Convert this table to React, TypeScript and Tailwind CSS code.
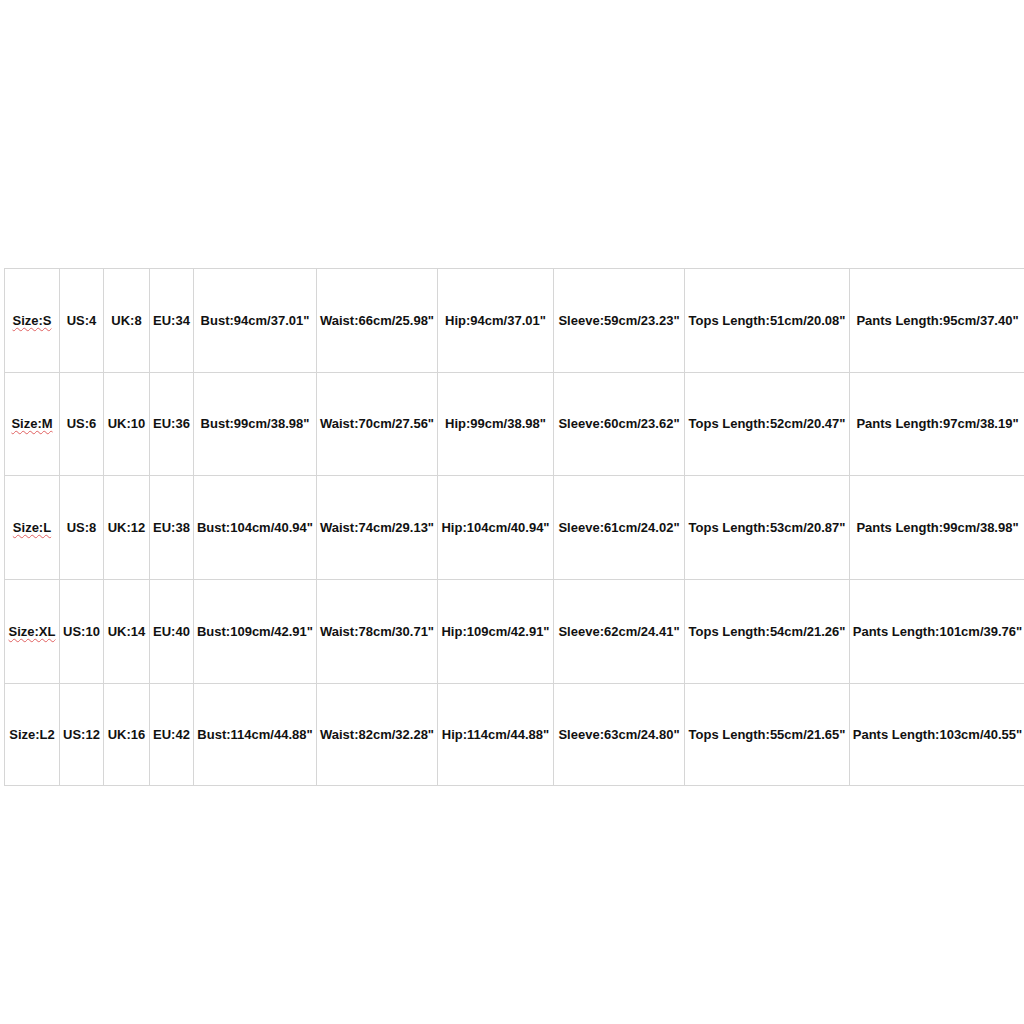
import React from 'react'

const widths = [55, 44, 46, 44, 123, 121, 116, 131, 165, 176]
const heights = ['h-[104px]', 'h-[103px]', 'h-[104px]', 'h-[104px]', 'h-[102px] border-b border-b-[#9e9e9e]']

const rows = [
    ['Size:S', 'US:4', 'UK:8', 'EU:34', 'Bust:94cm/37.01"', 'Waist:66cm/25.98"', 'Hip:94cm/37.01"', 'Sleeve:59cm/23.23"', 'Tops Length:51cm/20.08"', 'Pants Length:95cm/37.40"'],
    ['Size:M', 'US:6', 'UK:10', 'EU:36', 'Bust:99cm/38.98"', 'Waist:70cm/27.56"', 'Hip:99cm/38.98"', 'Sleeve:60cm/23.62"', 'Tops Length:52cm/20.47"', 'Pants Length:97cm/38.19"'],
    ['Size:L', 'US:8', 'UK:12', 'EU:38', 'Bust:104cm/40.94"', 'Waist:74cm/29.13"', 'Hip:104cm/40.94"', 'Sleeve:61cm/24.02"', 'Tops Length:53cm/20.87"', 'Pants Length:99cm/38.98"'],
    ['Size:XL', 'US:10', 'UK:14', 'EU:40', 'Bust:109cm/42.91"', 'Waist:78cm/30.71"', 'Hip:109cm/42.91"', 'Sleeve:62cm/24.41"', 'Tops Length:54cm/21.26"', 'Pants Length:101cm/39.76"'],
    ['Size:L2', 'US:12', 'UK:16', 'EU:42', 'Bust:114cm/44.88"', 'Waist:82cm/32.28"', 'Hip:114cm/44.88"', 'Sleeve:63cm/24.80"', 'Tops Length:55cm/21.65"', 'Pants Length:103cm/40.55"'],
]

function App() {
    return (
        <div className="w-[1024px] h-[1024px] bg-white overflow-hidden pt-[268px] pl-[4px] font-['Liberation_Sans',Arial,sans-serif]">
            <table className="table-fixed border-collapse w-[1021px] text-[13px] font-bold text-[#111]">
                <colgroup>
                    {widths.map((w, i) => (
                        <col key={i} style={{ width: w }} />
                    ))}
                </colgroup>
                <tbody>
                    {rows.map((row, r) => (
                        <tr key={r} className={heights[r]}>
                            {row.map((cell, c) => (
                                <td key={c} className="border border-[#d6d6d6] text-center whitespace-nowrap p-0">
                                    {c === 0 && r < 4 ? (
                                        <span className="underline decoration-wavy decoration-[#e06060] decoration-1 underline-offset-2">{cell}</span>
                                    ) : (
                                        cell
                                    )}
                                </td>
                            ))}
                        </tr>
                    ))}
                </tbody>
            </table>
        </div>
    )
}

export default App
